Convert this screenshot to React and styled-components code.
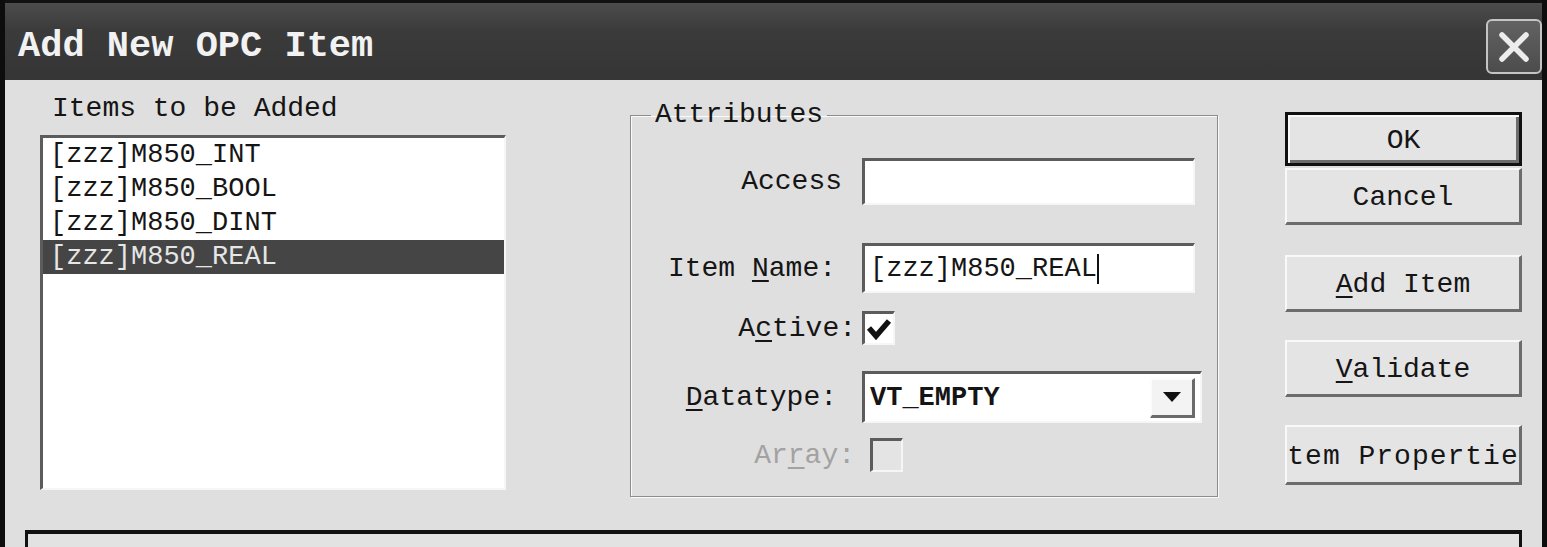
import styled, { createGlobalStyle } from "styled-components";

const GlobalStyle = createGlobalStyle`
  html, body {
    margin: 0;
    padding: 0;
    background: #dfdfdf;
  }
  body {
    font-family: "Liberation Mono", "DejaVu Sans Mono", monospace;
    color: #151515;
  }
`;

const Window = styled.div`
  width: 1547px;
  height: 547px;
  box-sizing: border-box;
  border-left: 5px solid #0d0d0d;
  border-right: 5px solid #0d0d0d;
  background: #dfdfdf;
  overflow: hidden;
  display: flex;
  flex-direction: column;
`;

const TitleBar = styled.div`
  height: 80px;
  flex: none;
  box-sizing: border-box;
  border-top: 3px solid #111;
  background: linear-gradient(#4c4c4c, #3b3b3b 35%, #353535);
  display: flex;
  align-items: center;
  justify-content: space-between;
  padding-left: 13px;
`;

const Title = styled.h1`
  margin: 0;
  padding-top: 8px;
  font-size: 37px;
  font-weight: bold;
  color: #f2f2f2;
`;

const CloseButton = styled.div`
  width: 56px;
  height: 55px;
  margin-top: 10px;
  box-sizing: border-box;
  border: 2px solid #c4c4c4;
  border-radius: 6px;
  background: linear-gradient(#626262, #4c4c4c);
  display: flex;
  align-items: center;
  justify-content: center;
`;

const Body = styled.div`
  height: 450px;
  flex: none;
  display: flex;
  align-items: flex-start;
`;

const LeftColumn = styled.div`
  margin-left: 35px;
  padding-top: 12px;
`;

const Caption = styled.div`
  padding-left: 12px;
  font-size: 28px;
  line-height: 34px;
  white-space: nowrap;
`;

const sunken = `
  box-sizing: border-box;
  border-top: 3px solid #5c5c5c;
  border-left: 3px solid #5c5c5c;
  border-right: 2px solid #f6f6f6;
  border-bottom: 2px solid #f6f6f6;
`;

const ListBox = styled.div`
  ${sunken}
  margin-top: 9px;
  width: 466px;
  height: 355px;
  background: #fff;
`;

const ListItem = styled.div`
  height: 34px;
  line-height: 34px;
  padding-left: 7px;
  font-size: 27px;
  white-space: nowrap;
  background: ${(p) => (p.$selected ? "#454545" : "transparent")};
  color: ${(p) => (p.$selected ? "#e6e6e6" : "#151515")};
`;

const GroupBox = styled.fieldset`
  margin: 18px 0 0 124px;
  padding: 0;
  width: 588px;
  height: 399px;
  box-sizing: border-box;
  border: 1px solid #8c8c8c;
  box-shadow: inset 1px 1px 0 #fafafa, 1px 1px 0 #fafafa;
`;

const Legend = styled.legend`
  margin-left: 20px;
  padding: 0 4px;
  font-size: 28px;
  line-height: 34px;
`;

const Fields = styled.div`
  padding-top: 26px;
`;

const Row = styled.div`
  display: flex;
  align-items: center;
  margin-top: ${(p) => p.$gap || 0}px;
`;

const Label = styled.div`
  width: 231px;
  box-sizing: border-box;
  padding-right: ${(p) => p.$pr}px;
  text-align: right;
  font-size: 28px;
  white-space: nowrap;
  color: ${(p) => (p.$disabled ? "#a2a2a2" : "#151515")};
`;

const U = styled.span`
  text-decoration: underline;
  text-underline-offset: 4px;
`;

const TextBox = styled.div`
  ${sunken}
  width: 333px;
  height: ${(p) => p.$h}px;
  background: #fff;
  padding-left: 5px;
  display: flex;
  align-items: center;
  font-size: 27px;
  white-space: nowrap;
`;

const Caret = styled.span`
  display: inline-block;
  width: 2px;
  height: 30px;
  background: #111;
`;

const CheckBox = styled.div`
  ${sunken}
  width: 33px;
  height: 34px;
  margin-left: ${(p) => p.$ml || 0}px;
  background: ${(p) => (p.$disabled ? "#e4e4e4" : "#fff")};
  display: flex;
  align-items: center;
  justify-content: center;
`;

const Select = styled.div`
  ${sunken}
  width: 340px;
  height: 52px;
  background: #fff;
  display: flex;
  align-items: center;
  padding-left: 5px;
  font-size: 27px;
  font-weight: bold;
`;

const DropButton = styled.div`
  margin-left: auto;
  margin-right: 5px;
  width: 45px;
  height: 40px;
  box-sizing: border-box;
  background: #f3f3f3;
  border-top: 2px solid #fcfcfc;
  border-left: 2px solid #fcfcfc;
  border-right: 3px solid #6a6a6a;
  border-bottom: 3px solid #6a6a6a;
  display: flex;
  align-items: center;
  justify-content: center;

  &::after {
    content: "";
    border-left: 9px solid transparent;
    border-right: 9px solid transparent;
    border-top: 10px solid #111;
  }
`;

const ButtonColumn = styled.div`
  margin-left: 67px;
  padding-top: 32px;
  width: 237px;
  display: flex;
  flex-direction: column;
`;

const Button = styled.div`
  height: ${(p) => p.$h}px;
  margin-top: ${(p) => p.$gap || 0}px;
  box-sizing: border-box;
  padding-top: 3px;
  background: #e4e4e4;
  border-top: 2px solid #f9f9f9;
  border-left: 2px solid #f9f9f9;
  border-right: 3px solid #6c6c6c;
  border-bottom: 3px solid #6c6c6c;
  ${(p) =>
    p.$default &&
    `
    border: 3px solid #111;
    box-shadow: inset 2px 2px 0 #f9f9f9, inset -3px -3px 0 #6c6c6c;
  `}
  display: flex;
  align-items: center;
  justify-content: center;
  overflow: hidden;
  white-space: nowrap;
  font-size: 28px;
  letter-spacing: ${(p) => p.$spacing || 0}px;
`;

const BottomPanel = styled.div`
  flex: 1;
  margin-left: 20px;
  width: 1497px;
  box-sizing: border-box;
  border-top: 4px solid #111;
  border-left: 3px solid #111;
  border-right: 3px solid #111;
  background: #e2e2e2;
`;

const items = ["[zzz]M850_INT", "[zzz]M850_BOOL", "[zzz]M850_DINT", "[zzz]M850_REAL"];

function CheckMark() {
  return (
    <svg width="26" height="24" viewBox="0 0 26 24">
      <path d="M3 11 L10 19 L23 4" fill="none" stroke="#111" strokeWidth="5.5" />
    </svg>
  );
}

export default function App() {
  return (
    <>
      <GlobalStyle />
      <Window>
        <TitleBar>
          <Title>Add New OPC Item</Title>
          <CloseButton>
            <svg width="34" height="34" viewBox="0 0 34 34">
              <path d="M5 5 L29 29 M29 5 L5 29" stroke="#ececec" strokeWidth="5.5" strokeLinecap="round" />
            </svg>
          </CloseButton>
        </TitleBar>
        <Body>
          <LeftColumn>
            <Caption>Items to be Added</Caption>
            <ListBox>
              {items.map((it, i) => (
                <ListItem key={it} $selected={i === 3}>
                  {it}
                </ListItem>
              ))}
            </ListBox>
          </LeftColumn>

          <GroupBox>
            <Legend>Attributes</Legend>
            <Fields>
              <Row>
                <Label $pr={20}>Access</Label>
                <TextBox $h={47} />
              </Row>
              <Row $gap={38}>
                <Label $pr={26}>
                  Item <U>N</U>ame:
                </Label>
                <TextBox $h={50}>
                  [zzz]M850_REAL
                  <Caret />
                </TextBox>
              </Row>
              <Row $gap={18}>
                <Label $pr={6}>
                  A<U>c</U>tive:
                </Label>
                <CheckBox>
                  <CheckMark />
                </CheckBox>
              </Row>
              <Row $gap={26}>
                <Label $pr={25}>
                  <U>D</U>atatype:
                </Label>
                <Select>
                  VT_EMPTY
                  <DropButton />
                </Select>
              </Row>
              <Row $gap={15}>
                <Label $pr={7} $disabled>
                  Ar<U>r</U>ay:
                </Label>
                <CheckBox $disabled $ml={8} />
              </Row>
            </Fields>
          </GroupBox>

          <ButtonColumn>
            <Button $default $h={54}>OK</Button>
            <Button $h={57} $gap={2}>Cancel</Button>
            <Button $h={57} $gap={30}>
              <U>A</U>dd Item
            </Button>
            <Button $h={57} $gap={28}>
              <U>V</U>alidate
            </Button>
            <Button $h={60} $gap={28} $spacing={1}>Item Properties</Button>
          </ButtonColumn>
        </Body>
        <BottomPanel />
      </Window>
    </>
  );
}
